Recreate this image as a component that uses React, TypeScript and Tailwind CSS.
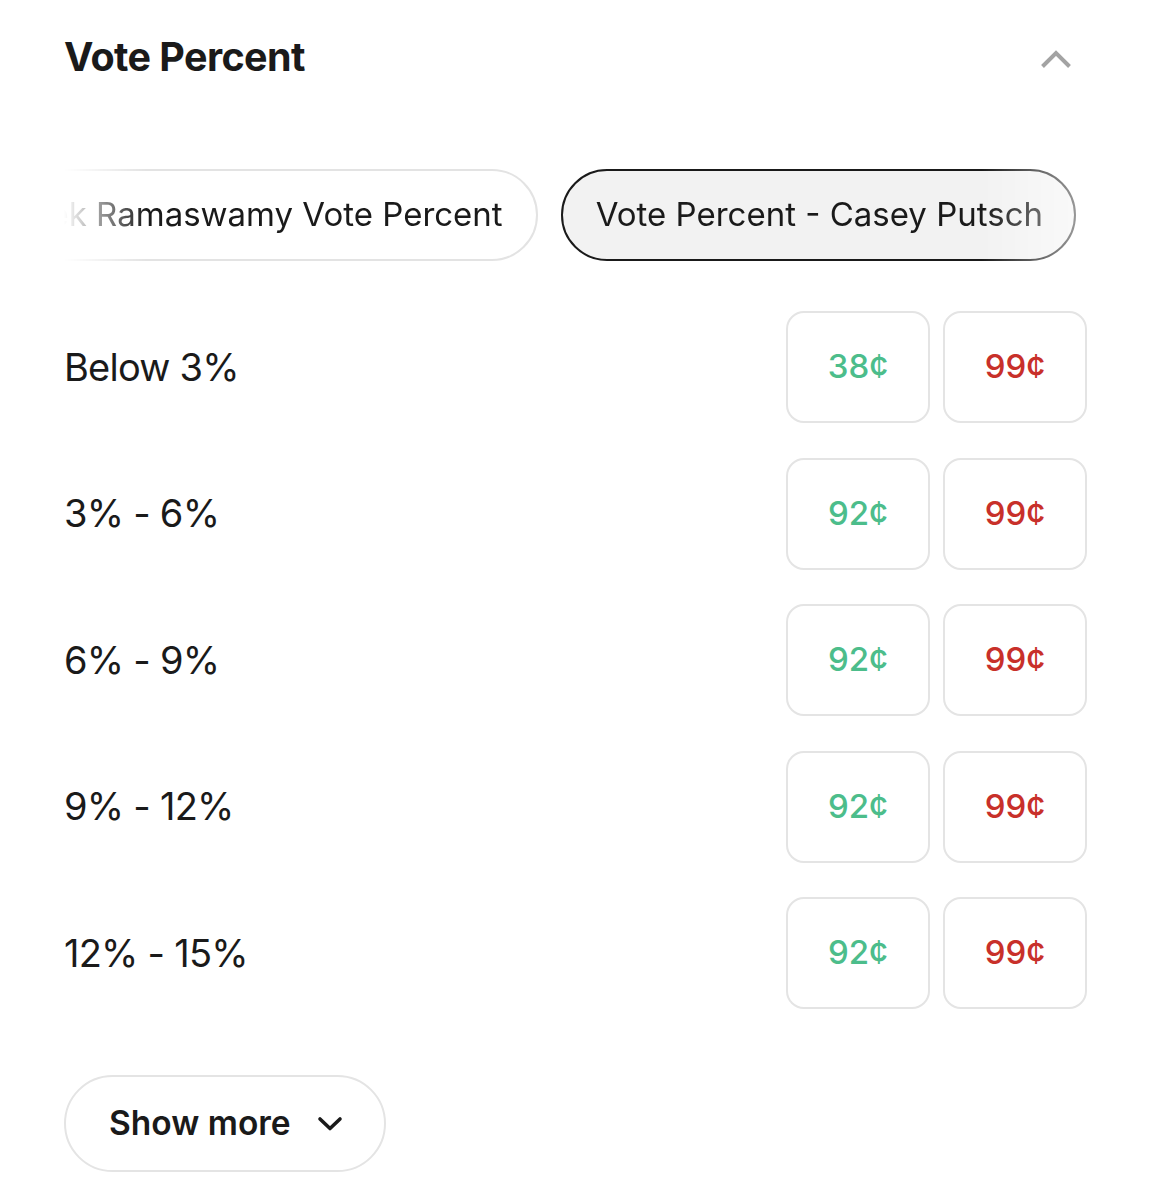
import React from "react";

const rows = [
  { label: "Below 3%", yes: "38¢", no: "99¢" },
  { label: "3% - 6%", yes: "92¢", no: "99¢" },
  { label: "6% - 9%", yes: "92¢", no: "99¢" },
  { label: "9% - 12%", yes: "92¢", no: "99¢" },
  { label: "12% - 15%", yes: "92¢", no: "99¢" },
];

export default function App() {
  return (
    <div
      className="w-[1151px] h-[1200px] bg-white pl-16 pr-16 text-[#1a1a1a] overflow-hidden"
      style={{ fontFamily: "Inter, 'Liberation Sans', sans-serif" }}
    >
      {/* Header */}
      <div className="flex items-center justify-between pt-[34px] pr-[15px]">
        <h2 className="text-[39.5px] leading-[46px] font-bold tracking-[-0.015em]">Vote Percent</h2>
        <svg width="32" height="19" viewBox="0 0 32 19" fill="none" className="mt-[4px]">
          <path d="M2.5 16.5 L16 3 L29.5 16.5" stroke="#a3a3a3" strokeWidth="4" strokeLinecap="butt" strokeLinejoin="miter" />
        </svg>
      </div>

      {/* Tabs */}
      <div className="mt-[89px] overflow-hidden pr-[11px] [mask-image:linear-gradient(to_right,transparent_0px,black_82px,black_calc(100%-105px),rgba(0,0,0,0.45)_calc(100%-11px))]">
        <div className="flex justify-end gap-[23px]">
          <div className="shrink-0 h-[92px] rounded-full border-2 border-[#e3e3e3] bg-white pl-[31px] pr-[33px] flex items-center text-[33px] whitespace-nowrap">
            Vivek Ramaswamy Vote Percent
          </div>
          <div className="shrink-0 h-[92px] rounded-full border-2 border-[#1a1a1a] bg-[#f2f2f2] pl-[33px] pr-[31px] flex items-center text-[33px] whitespace-nowrap">
            Vote Percent - Casey Putsch
          </div>
        </div>
      </div>

      {/* Rows */}
      <div className="mt-[50px] flex flex-col gap-[34.5px]">
        {rows.map((r) => (
          <div key={r.label} className="flex items-center justify-between h-[112px]">
            <div className="text-[38px] tracking-[-0.02em]">{r.label}</div>
            <div className="flex gap-[13px]">
              <div className="w-[144px] h-[112px] rounded-[18px] border-2 border-[#e4e4e4] flex items-center justify-center text-[33px] font-medium text-[#4cbd8b]">
                {r.yes}
              </div>
              <div className="w-[144px] h-[112px] rounded-[18px] border-2 border-[#e4e4e4] flex items-center justify-center text-[33px] font-medium text-[#c8302a]">
                {r.no}
              </div>
            </div>
          </div>
        ))}
      </div>

      {/* Show more */}
      <div className="mt-[66px]">
        <div className="w-[322px] h-[97px] rounded-full border-2 border-[#e4e4e4] flex items-center pl-[43px] gap-[26px]">
          <span className="text-[33.5px] font-semibold">Show more</span>
          <svg width="26" height="16" viewBox="0 0 26 16" fill="none">
            <path d="M3 3 L13 12.5 L23 3" stroke="#1a1a1a" strokeWidth="3.6" strokeLinecap="round" strokeLinejoin="round" />
          </svg>
        </div>
      </div>
    </div>
  );
}
